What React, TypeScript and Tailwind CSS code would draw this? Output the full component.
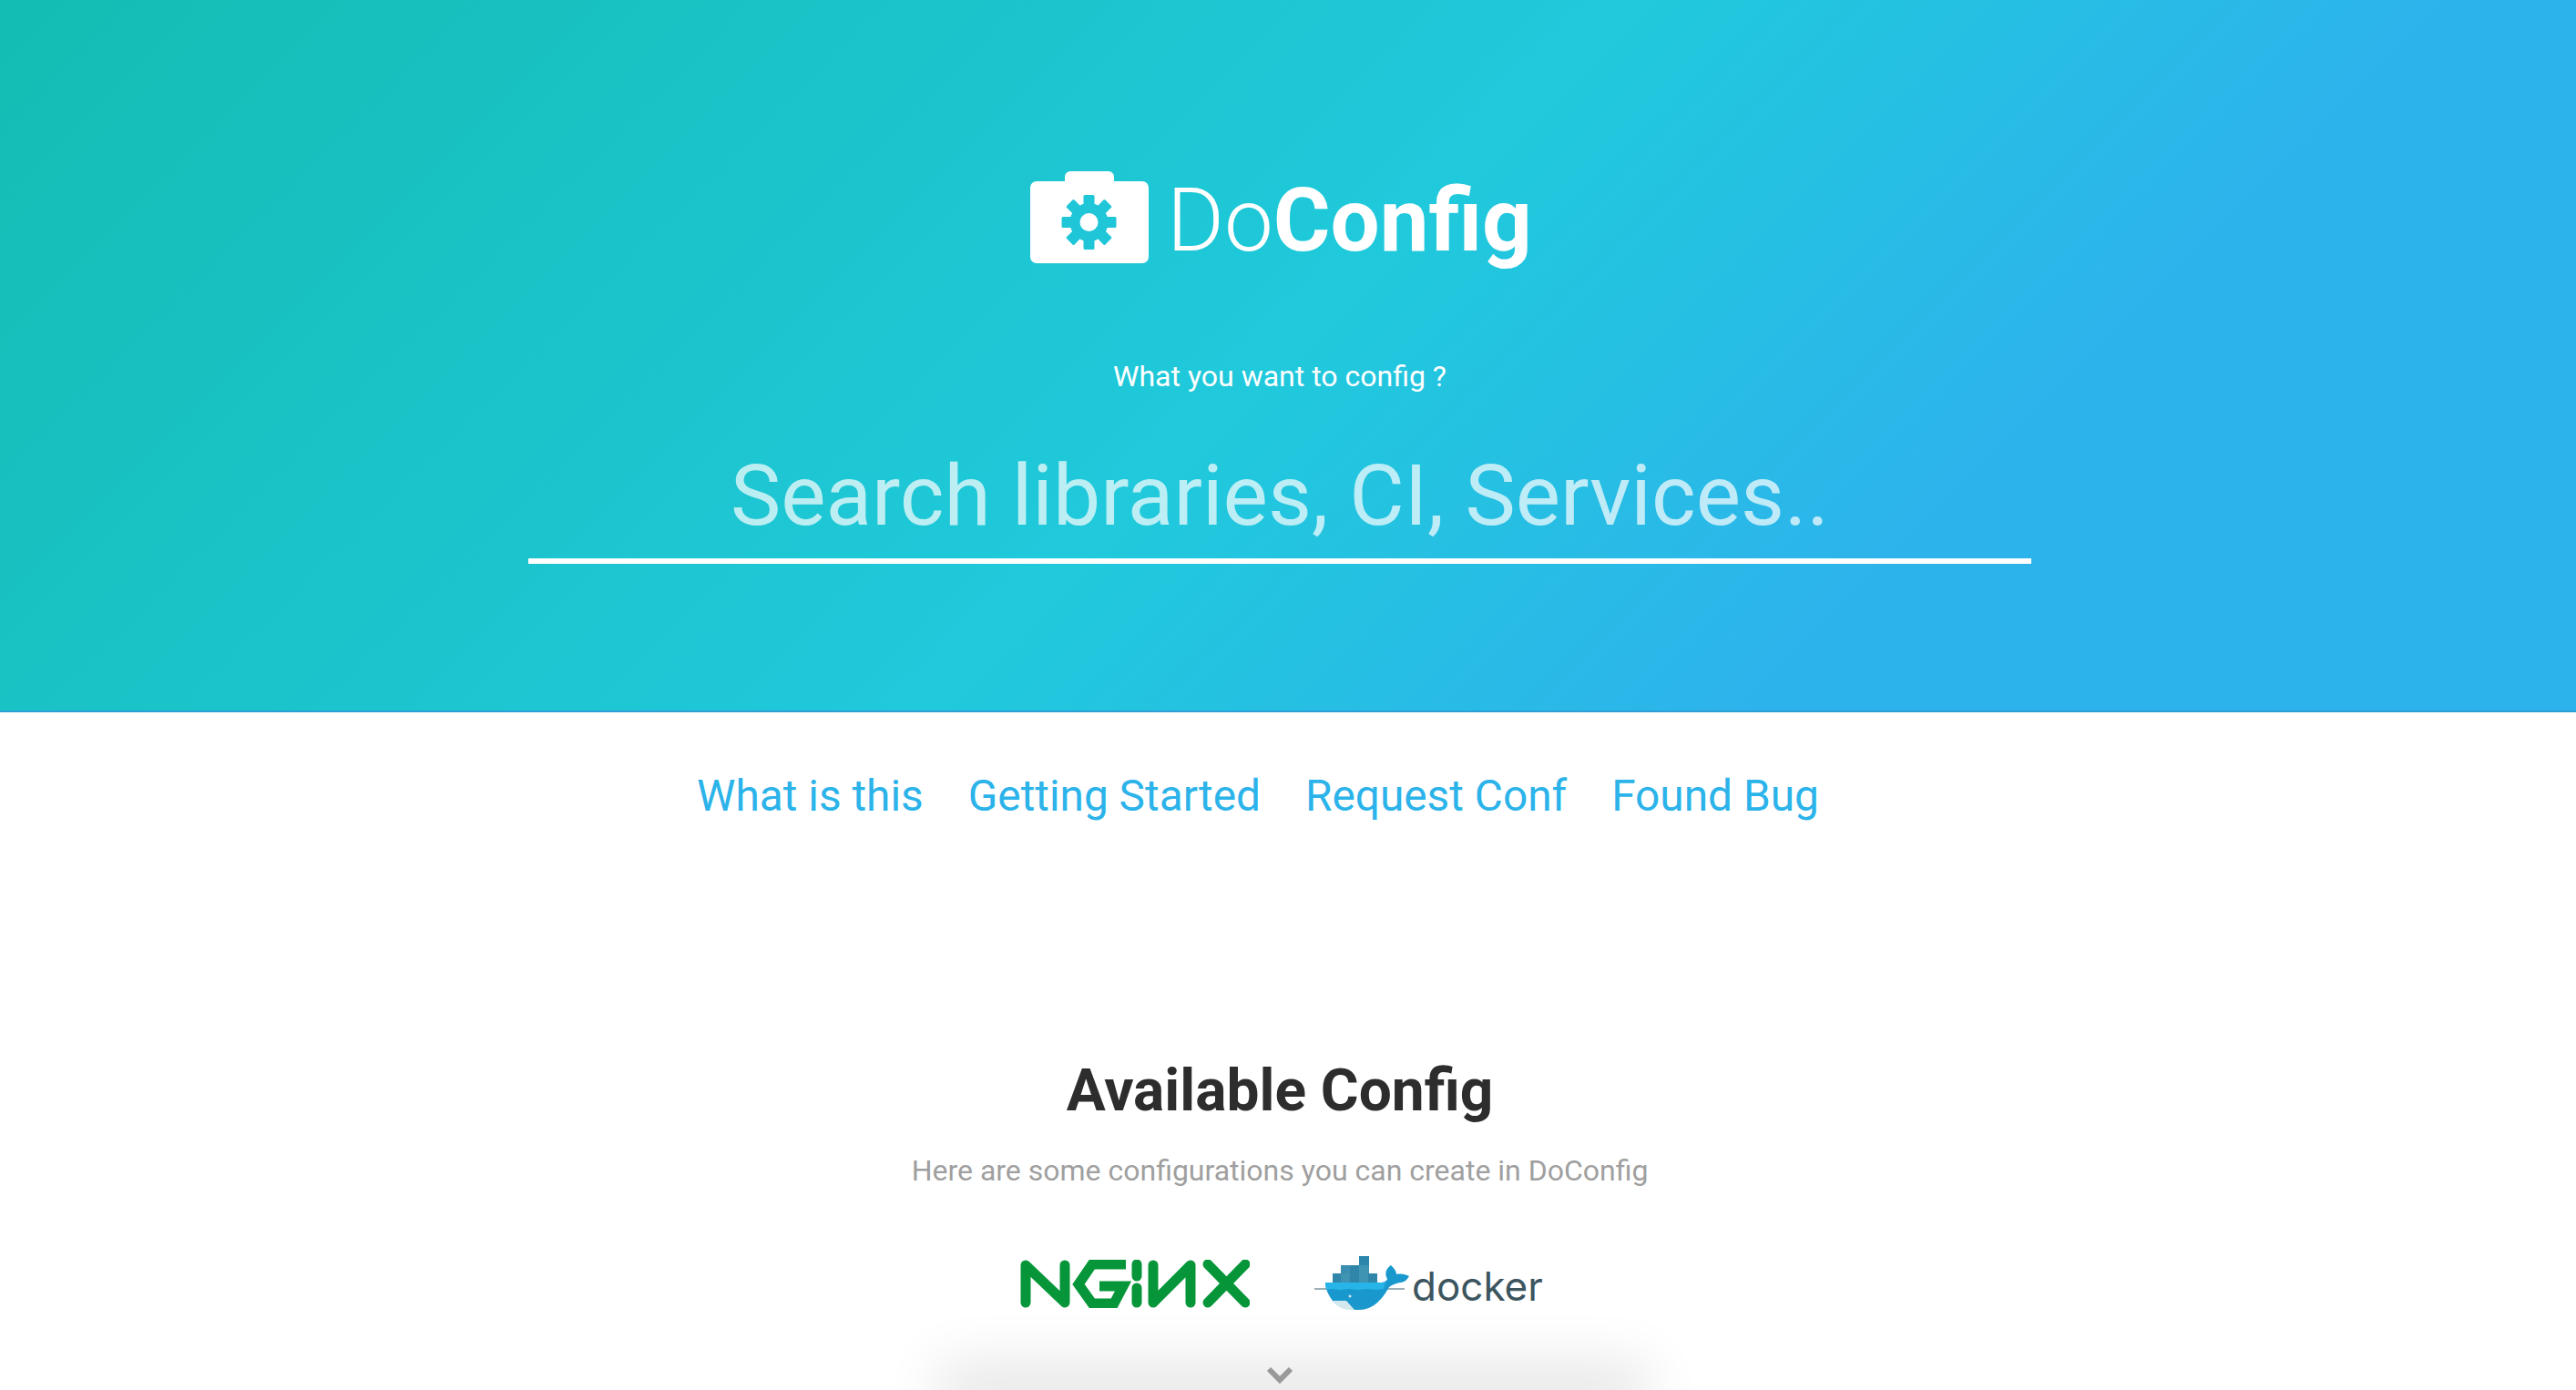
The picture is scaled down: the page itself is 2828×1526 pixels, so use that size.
import React from 'react';

const navLinks = ['What is this', 'Getting Started', 'Request Conf', 'Found Bug'];
const gearTeeth = [0, 45, 90, 135, 180, 225, 270, 315];

const GearCase = () => (
  <svg width="130" height="101" viewBox="0 0 130 101" className="shrink-0">
    <path
      fill="#fff"
      d="M38 11V6a6 6 0 0 1 6-6h42a6 6 0 0 1 6 6v5h31a7 7 0 0 1 7 7v76a7 7 0 0 1-7 7H7a7 7 0 0 1-7-7V18a7 7 0 0 1 7-7z"
    />
    <g fill="#1fc6d8" transform="translate(64.500 56)">
      <circle r="21" />
      {gearTeeth.map((angle) => (
        <rect key={angle} x="-6" y="-30" width="12" height="14" rx="1.500" transform={`rotate(${angle})`} />
      ))}
      <circle r="10" fill="#fff" />
    </g>
  </svg>
);

const NginxLogo = () => (
  <svg width="252" height="53" viewBox="0 0 252 53" fill="none" stroke="#069639" strokeWidth="11" strokeLinecap="round" strokeLinejoin="round" className="mt-[4px]">
    <path d="M6 47V6l43 41V6" />
    <path d="M116 5H79L64 27l15 21h24l10-19H87" strokeLinecap="butt" strokeLinejoin="miter" />
    <path d="M128 5v13M128 31v16" />
    <path d="M146 6v41L187 6v41" />
    <path d="M206 5l41 42M247 5l-41 42" />
  </svg>
);

const DockerLogo = () => (
  <svg width="256" height="60" viewBox="0 0 256 60">
    <rect x="49" y="0" width="11" height="10" fill="#2a86aa" />
    <rect x="29" y="10" width="10" height="9" fill="#3a8fb0" />
    <rect x="39" y="10" width="10" height="9" fill="#2f86a8" />
    <rect x="49" y="10" width="11" height="9" fill="#3f94b4" />
    <rect x="20" y="19" width="9" height="10" fill="#2f86a8" />
    <rect x="29" y="19" width="10" height="10" fill="#3f94b4" />
    <rect x="39" y="19" width="10" height="10" fill="#2f86a8" />
    <rect x="49" y="19" width="10" height="10" fill="#3f94b4" />
    <rect x="59" y="19" width="10" height="10" fill="#2f86a8" />
    <path d="M0 36h99" stroke="#7d949e" strokeWidth="1.500" />
    <path d="M12 29h60c4 0 7-1 8-4-3-5-2-11 4-15 3 3 6 6 6 10 5-1 10 0 14 2-3 5-6 7-10 7-4 1-8 2-12 5-3 5-5 8-8 12-7 8-15 13-24 13-12 0-23-1-30-10-5-7-8-13-8-20z" fill="#1998cd" />
    <path d="M12 29h66l-2 7-8 1-10-1-10 1-10-1-10 1-10-1-5 1z" fill="#27b4e8" />
    <path d="M20 49h15l9 10c-11 1-19-3-24-10z" fill="#d3e9ee" />
    <circle cx="39" cy="44" r="1.500" fill="#cfe4ec" />
    <text x="107" y="49" fontFamily="Inter, sans-serif" fontSize="44" fill="#3c555f">docker</text>
  </svg>
);

export default function App() {
  return (
    <div className="relative h-[1526px] overflow-hidden bg-white font-['Roboto',sans-serif]">
      <header className="h-[782px] border-b-2 border-[#2d9fd6] bg-[linear-gradient(135deg,#14bdb2_0%,#20c9dc_50%,#2db3ec_75%,#2db3ec_100%)] pr-[18px] flex flex-col items-center">
        <div className="mt-[188px] ml-[3px] flex h-[101px] items-start">
          <GearCase />
          <h1 className="ml-[20px] mt-[-1px] text-[96px] leading-[110px] text-white font-light">
            Do<span className="font-bold">Config</span>
          </h1>
        </div>
        <p className="mt-[104px] text-[32px] leading-[40px] text-white">What you want to config ?</p>
        <div className="mt-[52px] w-[1650px] h-[134px] border-b-[6px] border-white text-center text-[93px] leading-[120px] text-white/70">
          Search libraries, CI, Services..
        </div>
      </header>

      <div className="pr-[18px] flex flex-col items-center">
        <nav className="mt-[62px] pr-[48px] flex gap-[49px] text-[47.800px] leading-[60px] text-[#2bb3ea]">
          {navLinks.map((link) => (
            <a key={link}>{link}</a>
          ))}
        </nav>
        <h2 className="mt-[254px] text-[64px] leading-[80px] font-bold text-[#2d2d2d]">Available Config</h2>
        <p className="mt-[27px] text-[32px] leading-[40px] text-[#9f9f9f]">Here are some configurations you can create in DoConfig</p>
        <div className="mt-[74px] ml-[9px] flex items-start gap-[71px]">
          <NginxLogo />
          <DockerLogo />
        </div>
      </div>

      {/* soft shadow behind the scroll arrow */}
      <div className="absolute bottom-0 left-[1060px] w-[719px] h-0 shadow-[0_0_60px_30px_#e6e6e6]" />
      <div className="absolute bottom-0 inset-x-0 flex justify-center pr-[18px]">
        <svg width="30" height="20" viewBox="0 0 30 20" className="mb-[7px]" fill="none" stroke="#999" strokeWidth="6">
          <path d="M3 4l12 12L27 4" />
        </svg>
      </div>
    </div>
  );
}
